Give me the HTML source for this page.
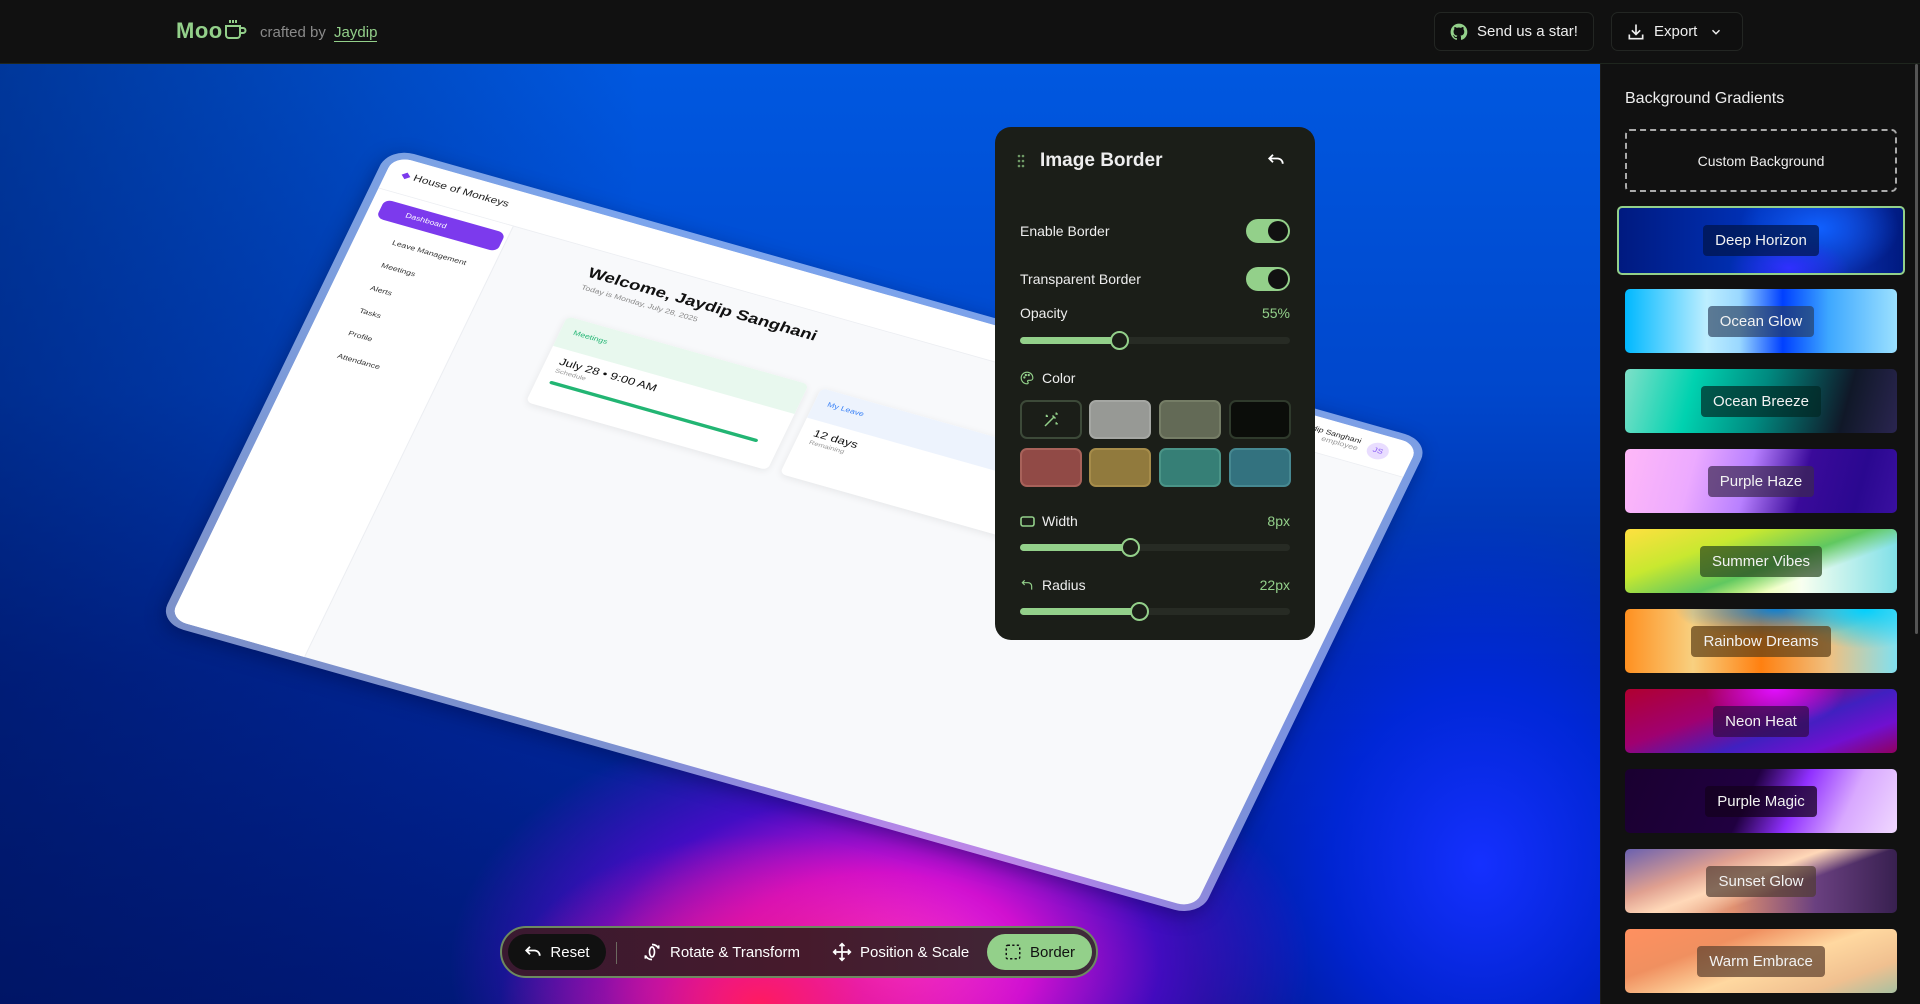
<!DOCTYPE html>
<html><head><meta charset="utf-8">
<style>
*{box-sizing:border-box;margin:0;padding:0}
body{width:1920px;height:1004px;overflow:hidden;background:#111;font-family:"Liberation Sans",sans-serif;position:relative}
.hdr{position:absolute;left:0;top:0;width:1920px;height:64px;background:#111;border-bottom:1px solid #1f261e}
.logo{position:absolute;left:176px;top:18px;color:#93d08a;font-size:22px;font-weight:bold;letter-spacing:.5px}
.crafted{position:absolute;left:260px;top:24px;color:#8a8a8a;font-size:15px}
.crafted span{color:#93d08a;border-bottom:1px solid #93d08a;margin-left:4px}
.btn{position:absolute;top:12px;height:39px;border:1px solid #232623;border-radius:7px;background:#0f0f0f;color:#eee;font-size:15px;display:flex;align-items:center;gap:8px;padding:0 14px;white-space:nowrap}
.canvas{position:absolute;left:0;top:64px;width:1600px;height:940px;overflow:hidden;
background:
radial-gradient(ellipse 260px 170px at 760px 940px,#ff1b60 0%,rgba(230,20,140,.7) 40%,rgba(200,0,200,0) 100%),
radial-gradient(ellipse 430px 260px at 880px 900px,#ff40e6 0%,#d010d0 35%,rgba(110,0,230,.6) 65%,rgba(40,0,255,0) 100%),
radial-gradient(ellipse 300px 350px at 1480px 800px,#1530ff 0%,rgba(0,40,255,.6) 50%,rgba(0,40,255,0) 100%),
linear-gradient(90deg,rgba(0,15,70,.45) 0%,rgba(0,15,70,0) 40%),
linear-gradient(180deg,#0058e0 0%,#0047cc 35%,#0028a0 65%,#001a80 100%)}
.sb{position:absolute;left:1600px;top:64px;width:320px;height:940px;background:#111;border-left:1px solid #1c1c1c}
.sb h3{position:absolute;left:24px;top:26px;color:#eee;font-size:16px;font-weight:normal}
.cust{position:absolute;left:24px;top:65px;width:272px;height:63px;border:2px dashed #aaa;border-radius:5px;color:#eee;font-size:14px;display:flex;align-items:center;justify-content:center}
.g{position:absolute;left:24px;width:272px;height:64px;border-radius:5px;display:flex;align-items:center;justify-content:center}
.g span{background:rgba(20,20,30,.55);color:#f2f2f2;font-size:15px;padding:7px 12px;border-radius:4px}
.scroll{position:absolute;right:2px;top:0;width:3px;height:570px;background:#555;border-radius:2px}
.panel{position:absolute;left:995px;top:127px;width:320px;height:513px;background:#1b1e18;border-radius:16px;color:#eee;font-size:14px}
.panel .t{position:absolute;left:45px;top:23px;font-size:19px;font-weight:bold}
.lbl{position:absolute;left:25px}
.val{position:absolute;right:25px;color:#93d08a}
.tog{position:absolute;left:251px;width:44px;height:24px;border-radius:12px;background:#93d08a}
.tog::after{content:"";position:absolute;right:2px;top:2px;width:20px;height:20px;border-radius:50%;background:#111}
.trk{position:absolute;left:25px;width:270px;height:7px;border-radius:4px;background:#272b24}
.trk i{position:absolute;left:0;top:0;height:7px;border-radius:4px;background:#93d08a}
.trk b{position:absolute;top:-6px;width:19px;height:19px;border-radius:50%;background:#1b1e18;border:2px solid #93d08a}
.sw{position:absolute;width:62px;height:39px;border-radius:7px;border:2px solid}
.tb{position:absolute;left:500px;top:926px;width:598px;height:52px;border-radius:26px;background:linear-gradient(90deg,#3a1930,#461a2c 50%,#3e2a3a);border:2px solid #6d8a60;color:#fff;font-size:15px}
.tb .it{position:absolute;top:6px;height:36px;display:flex;align-items:center;gap:8px}
</style></head><body>
<div class="hdr">
 <div class="logo">Moo<svg width="26" height="22" viewBox="0 0 26 22" style="vertical-align:-2px"><path d="M3 8h14v9a3 3 0 0 1-3 3H6a3 3 0 0 1-3-3z M17 10h3a2.5 2.5 0 0 1 0 5h-3 M7 2v3 M10 2v3 M13 2v3" fill="none" stroke="#93d08a" stroke-width="2"/></svg></div>
 <div class="crafted">crafted by <span>Jaydip</span></div>
 <div class="btn" style="left:1434px;width:160px"><svg width="20" height="20" viewBox="0 0 24 24"><path d="M12 2a10 10 0 0 0-3.2 19.5c.5.1.7-.2.7-.5v-1.8c-2.8.6-3.4-1.2-3.4-1.2-.5-1.2-1.1-1.5-1.1-1.5-.9-.6.1-.6.1-.6 1 .1 1.5 1 1.5 1 .9 1.5 2.300 1.1 2.9.8.1-.6.3-1.1.6-1.3-2.2-.3-4.6-1.1-4.6-5 0-1.1.4-2 1-2.7-.1-.3-.4-1.3.1-2.7 0 0 .8-.3 2.8 1a9.6 9.6 0 0 1 5 0c1.9-1.3 2.8-1 2.8-1 .5 1.4.2 2.4.1 2.7.6.7 1 1.6 1 2.7 0 3.9-2.3 4.7-4.6 5 .4.3.7.9.7 1.9V21c0 .3.2.6.7.5A10 10 0 0 0 12 2z" fill="#93d08a"/></svg>Send us a star!</div>
 <div class="btn" style="left:1611px;width:132px"><svg width="20" height="20" viewBox="0 0 24 24" fill="none" stroke="#eee" stroke-width="2"><path d="M12 3v12M7 10l5 5 5-5M4 15v5h16v-5"/></svg>Export<svg width="14" height="14" viewBox="0 0 24 24" fill="none" stroke="#eee" stroke-width="2.5" style="margin-left:4px"><path d="M6 9l6 6 6-6"/></svg></div>
</div>

<div class="canvas">
 <div style="position:absolute;left:389px;top:83px;width:1000px;height:610px;transform-origin:0 0;transform:matrix(1.041,0.294,-0.378,0.78,0,0);border-radius:24px;background:rgba(225,235,255,.55);padding:8px;box-shadow:0 6px 20px rgba(0,0,40,.35)">
  <div style="position:relative;width:100%;height:100%;background:#f8f9fb;border-radius:16px;overflow:hidden;font-family:'Liberation Sans',sans-serif">
   <div style="position:absolute;left:0;top:0;width:100%;height:42px;background:#fff;border-bottom:1px solid #eceef2"></div>
   <div style="position:absolute;left:0;top:42px;width:130px;height:570px;background:#fff;border-right:1px solid #eceef2"></div>
   <div style="position:absolute;left:14px;top:12px;font-size:11px;color:#222"><span style="color:#7c3aed">◆</span> House of Monkeys</div>
   <div style="position:absolute;right:50px;top:10px;font-size:8px;color:#222;text-align:right">Jaydip Sanghani<br><span style="color:#999">employee</span></div>
   <div style="position:absolute;right:22px;top:10px;width:20px;height:20px;border-radius:50%;background:#e9ddff;color:#8b5cf6;font-size:8px;text-align:center;line-height:20px">JS</div>
   <div style="position:absolute;left:10px;top:52px;width:116px;height:24px;border-radius:7px;background:#7c3aed;color:#fff;font-size:8px;line-height:24px;padding-left:24px">Dashboard</div>
   <div style="position:absolute;left:34px;top:84px;font-size:8px;color:#333;line-height:29px">Leave Management<br>Meetings<br>Alerts<br>Tasks<br>Profile<br>Attendance</div>
   <div style="position:absolute;left:212px;top:60px;font-size:17px;font-weight:bold;color:#111">Welcome, Jaydip Sanghani</div>
   <div style="position:absolute;left:212px;top:84px;font-size:8px;color:#888">Today is Monday, July 28, 2025</div>
   <div style="position:absolute;left:212px;top:126px;width:232px;height:110px;background:#fff;border-radius:6px;box-shadow:0 2px 8px rgba(0,0,0,.08);overflow:hidden">
    <div style="height:38px;background:#e8f8ee;color:#22b573;font-size:8px;padding:12px 12px">Meetings</div>
    <div style="position:absolute;left:12px;top:46px;font-size:12px;color:#111">July 28 • 9:00 AM</div>
    <div style="position:absolute;left:12px;top:62px;font-size:7px;color:#999">Schedule</div>
    <div style="position:absolute;left:12px;top:78px;width:200px;height:4px;border-radius:2px;background:#22b573"></div>
   </div>
   <div style="position:absolute;left:456px;top:126px;width:232px;height:110px;background:#fff;border-radius:6px;box-shadow:0 2px 8px rgba(0,0,0,.08);overflow:hidden">
    <div style="height:38px;background:#edf3fd;color:#3b82f6;font-size:8px;padding:12px 12px">My Leave</div>
    <div style="position:absolute;left:12px;top:46px;font-size:12px;color:#111">12 days</div>
    <div style="position:absolute;left:12px;top:62px;font-size:7px;color:#999">Remaining</div>
   </div>
  </div>
 </div>
</div>

<div class="panel">
 <svg style="position:absolute;left:22px;top:27px" width="8" height="14"><g fill="#6f9a66"><circle cx="2" cy="2" r="1.3"/><circle cx="6" cy="2" r="1.3"/><circle cx="2" cy="7" r="1.3"/><circle cx="6" cy="7" r="1.3"/><circle cx="2" cy="12" r="1.3"/><circle cx="6" cy="12" r="1.3"/></g></svg>
 <div class="t">Image Border</div>
 <svg style="position:absolute;left:272px;top:25px" width="18" height="16" viewBox="0 0 24 20" fill="none" stroke="#fff" stroke-width="2.4"><path d="M8 3L3 8l5 5M3 8h11a7 7 0 0 1 7 7"/></svg>
 <div class="lbl" style="top:96px">Enable Border</div><div class="tog" style="top:92px"></div>
 <div class="lbl" style="top:144px">Transparent Border</div><div class="tog" style="top:140px"></div>
 <div class="lbl" style="top:178px">Opacity</div><div class="val" style="top:178px">55%</div>
 <div class="trk" style="top:210px"><i style="width:100px"></i><b style="left:90px"></b></div>
 <svg style="position:absolute;left:25px;top:244px" width="14" height="14" viewBox="0 0 24 24" fill="none" stroke="#93d08a" stroke-width="2"><path d="M12 2a10 10 0 0 0 0 20c1.5 0 2-1 2-2s-1-1.5-1-2.5 1-1.5 2-1.5h3a4 4 0 0 0 4-4C22 6 17.5 2 12 2z"/><circle cx="7.5" cy="11" r="1"/><circle cx="10" cy="7" r="1"/><circle cx="15" cy="7" r="1"/></svg>
 <div class="lbl" style="left:47px;top:243px">Color</div>
 <div class="sw" style="left:25px;top:273px;border-color:#3d4a39;background:#1b1e18;display:flex;align-items:center;justify-content:center"><svg width="18" height="18" viewBox="0 0 24 24" fill="none" stroke="#93d08a" stroke-width="2"><path d="M4 20L16 8M14 6l4 4M19 2v3M21 4h-3M6 5v3M8 7H5M19 15v3M21 17h-3"/></svg></div>
 <div class="sw" style="left:94px;top:273px;background:#979995;border-color:#a5a7a3"></div>
 <div class="sw" style="left:164px;top:273px;background:#636a56;border-color:#757d66"></div>
 <div class="sw" style="left:234px;top:273px;background:#0b0d0a;border-color:#2f3a2c"></div>
 <div class="sw" style="left:25px;top:321px;background:#914a46;border-color:#a8625a"></div>
 <div class="sw" style="left:94px;top:321px;background:#917a3d;border-color:#a68c4a"></div>
 <div class="sw" style="left:164px;top:321px;background:#367f76;border-color:#4a9487"></div>
 <div class="sw" style="left:234px;top:321px;background:#33727f;border-color:#468891"></div>
 <svg style="position:absolute;left:25px;top:389px" width="15" height="11"><rect x="1" y="1" width="13" height="9" rx="2" fill="none" stroke="#93d08a" stroke-width="1.6"/></svg>
 <div class="lbl" style="left:47px;top:386px">Width</div><div class="val" style="top:386px">8px</div>
 <div class="trk" style="top:417px"><i style="width:110px"></i><b style="left:101px"></b></div>
 <svg style="position:absolute;left:25px;top:451px" width="14" height="14" viewBox="0 0 24 24" fill="none" stroke="#93d08a" stroke-width="2"><path d="M8 4L4 8l4 4M4 8h10a6 6 0 0 1 6 6v6"/></svg>
 <div class="lbl" style="left:47px;top:450px">Radius</div><div class="val" style="top:450px">22px</div>
 <div class="trk" style="top:481px"><i style="width:120px"></i><b style="left:110px"></b></div>
</div>

<div class="tb">
 <div class="it" style="left:6px;width:98px;border-radius:18px;background:#111;justify-content:center"><svg width="18" height="16" viewBox="0 0 24 20" fill="none" stroke="#fff" stroke-width="2.4"><path d="M8 3L3 8l5 5M3 8h11a7 7 0 0 1 7 7"/></svg>Reset</div>
 <div style="position:absolute;left:114px;top:14px;width:1px;height:22px;background:#6d6a60"></div>
 <div class="it" style="left:140px"><svg width="20" height="20" viewBox="0 0 24 24" fill="none" stroke="#fff" stroke-width="2"><path d="M12 3a9 9 0 0 1 8 5M12 21a9 9 0 0 1-8-5M20 8V4M4 16v4M9 12a3 6 0 1 0 6 0 3 6 0 1 0-6 0"/></svg>Rotate &amp; Transform</div>
 <div class="it" style="left:330px"><svg width="20" height="20" viewBox="0 0 24 24" fill="none" stroke="#fff" stroke-width="2"><path d="M12 2v20M2 12h20M9 5l3-3 3 3M9 19l3 3 3-3M5 9l-3 3 3 3M19 9l3 3-3 3"/></svg>Position &amp; Scale</div>
 <div class="it" style="left:485px;width:105px;border-radius:18px;background:#93d08a;color:#111;justify-content:center"><svg width="18" height="18" viewBox="0 0 24 24" fill="none" stroke="#111" stroke-width="2" stroke-dasharray="3 3"><rect x="3" y="3" width="18" height="18" rx="2"/></svg>Border</div>
</div>

<div class="sb">
 <h3>Background Gradients</h3>
 <div class="cust">Custom Background</div>
 <div class="g" style="left:16px;top:142px;width:288px;height:69px;border:2px solid #93d08a;background:radial-gradient(ellipse 60px 30px at 170px 60px,#3030ff,transparent),radial-gradient(ellipse 80px 50px at 200px 20px,#1060ff,transparent),linear-gradient(90deg,#001a80,#0033bb 50%,#0a2ca8 80%,#001a80)"><span style="background:rgba(0,20,70,.7)">Deep Horizon</span></div>
 <div class="g" style="top:225px;background:linear-gradient(90deg,#00b8ff,#bdeeff 30%,#9ad8ff 42%,#0040ff 58%,#3ea8ff 75%,#9be0ff)"><span style="background:rgba(40,60,90,.65)">Ocean Glow</span></div>
 <div class="g" style="top:305px;background:linear-gradient(105deg,#7ee0c8,#00d2b0 25%,#008a80 50%,#101828 80%,#2a2550)"><span style="background:rgba(0,40,35,.7)">Ocean Breeze</span></div>
 <div class="g" style="top:385px;background:linear-gradient(105deg,#ffb8f8,#ecaaff 25%,#b880ff 45%,#3a0a9a 65%,#2a0890 85%,#3a10a0)"><span style="background:rgba(60,40,80,.7)">Purple Haze</span></div>
 <div class="g" style="top:465px;background:linear-gradient(160deg,#ffe040,#c8e830 30%,#60c860 55%,transparent 70%),linear-gradient(90deg,#ffe050,#e8ff90 40%,#f8fff0 65%,#80e0e8)"><span style="background:rgba(40,70,30,.7)">Summer Vibes</span></div>
 <div class="g" style="top:545px;background:radial-gradient(ellipse 80px 40px at 240px 0,#00d0ff,transparent),radial-gradient(ellipse 100px 30px at 150px 0,#1080d0,transparent),linear-gradient(90deg,#ff9020,#f8d080 25%,#ff8010 50%,#f0c080 75%,#80e0f0)"><span style="background:rgba(90,60,20,.7)">Rainbow Dreams</span></div>
 <div class="g" style="top:625px;background:radial-gradient(ellipse 70px 40px at 150px 0,#e010ff,transparent),linear-gradient(160deg,#b00030,#a00070 35%,#4020c0 60%,#7010d0 80%,#900060)"><span style="background:rgba(50,10,70,.7)">Neon Heat</span></div>
 <div class="g" style="top:705px;background:linear-gradient(115deg,#1a0030,#200040 45%,#9030ff 62%,#d8a8ff 80%,#f0d8ff)"><span style="background:rgba(20,0,30,.75)">Purple Magic</span></div>
 <div class="g" style="top:785px;background:linear-gradient(160deg,#6a60b0,#e0a090 30%,#ffd8b8 45%,transparent 60%),linear-gradient(90deg,#ffe0c0,#e09070 40%,#6a4080 70%,#382050)"><span style="background:rgba(80,60,50,.7)">Sunset Glow</span></div>
 <div class="g" style="top:865px;background:linear-gradient(160deg,#ff9060,#f09060 30%,#ffd8a0 55%,#f0c090 80%,#a8c0a0)"><span style="background:rgba(100,70,50,.75)">Warm Embrace</span></div>
 <div class="scroll"></div>
</div>
</body></html>
